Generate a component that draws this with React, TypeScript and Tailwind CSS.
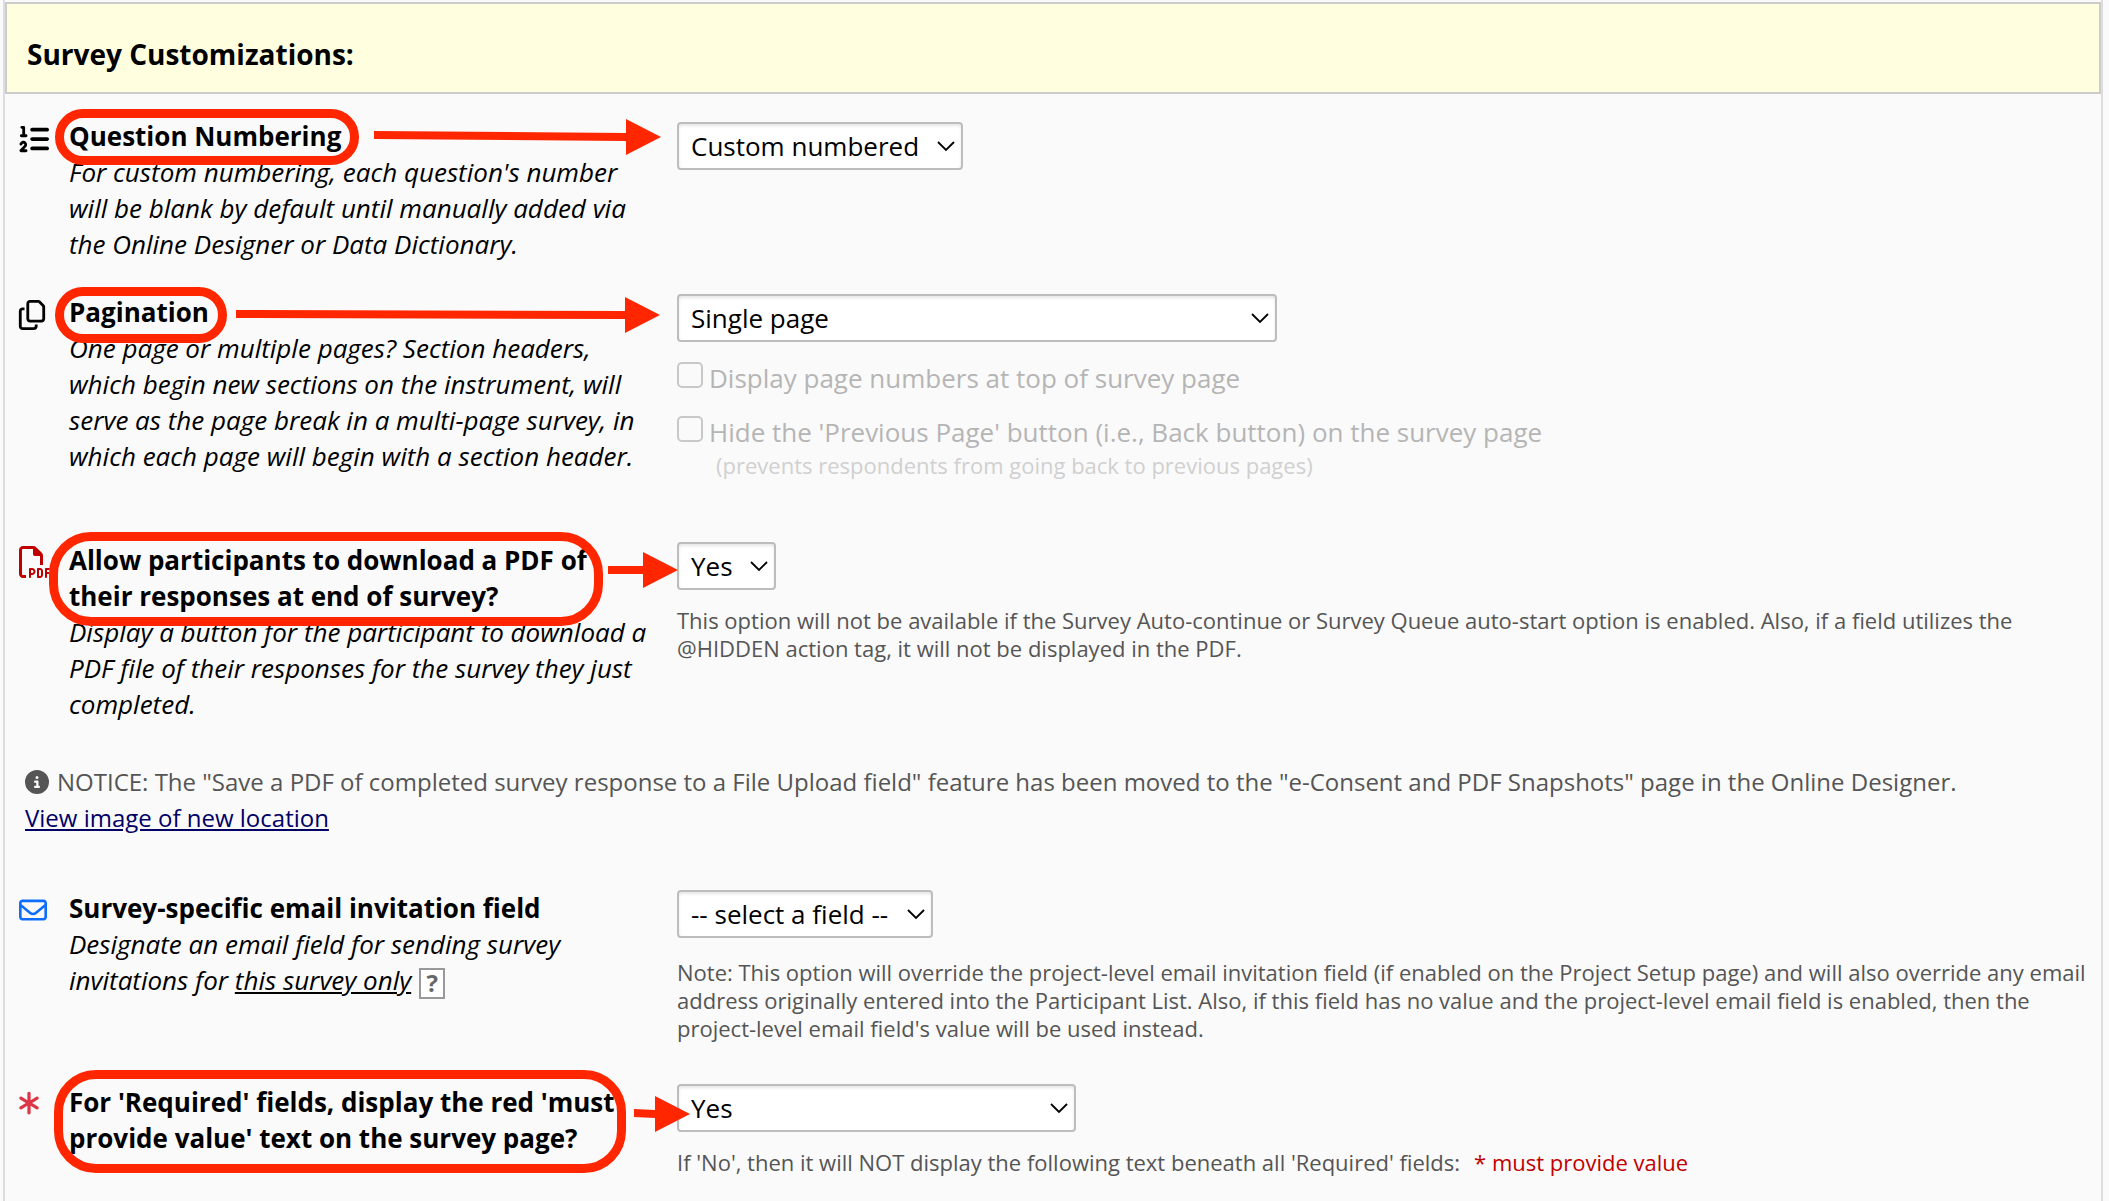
import type { ReactNode } from 'react'
import {
  FaAsterisk,
  FaCircleInfo,
  FaListOl,
  FaRegCopy,
  FaRegEnvelope,
  FaRegFilePdf,
} from 'react-icons/fa6'

type RowProps = {
  icon: ReactNode
  title: string
  htmlFor: string
  description?: ReactNode
  children: ReactNode
  marks?: ReactNode
  className: string
}

function Row({ icon, title, htmlFor, description, children, marks, className }: RowProps) {
  return (
    <div className={`relative grid grid-cols-[50px_580px_1fr] ${className}`}>
      <div className="pt-1.5">{icon}</div>
      <div>
        <label htmlFor={htmlFor} className="block font-bold">
          {title}
        </label>
        {description && <p className="italic">{description}</p>}
      </div>
      <div className="pl-7">{children}</div>
      {marks}
    </div>
  )
}

type SelectProps = {
  id: string
  options: string[]
  className: string
}

function Select({ id, options, className }: SelectProps) {
  return (
    <div className={`relative ${className}`}>
      <select
        id={id}
        className="block h-12 w-full appearance-none rounded border-2 border-[#bdbdbd] bg-white pl-3 text-[26px] leading-[36px] shadow-[inset_0_2px_3px_rgba(0,0,0,0.1)]"
      >
        {options.map((option) => (
          <option key={option}>{option}</option>
        ))}
      </select>
      <svg
        viewBox="0 0 18 11"
        className="pointer-events-none absolute top-[19px] right-2 w-[18px]"
        fill="none"
        stroke="#000"
        strokeWidth="1.8"
      >
        <path d="M1 1l8 8 8-8" />
      </svg>
    </div>
  )
}

// Red outline drawn over a setting's title
function Ring({ className }: { className: string }) {
  return <div className={`pointer-events-none absolute border-[#ff2600] border-9 ${className}`} />
}

function Arrow({ length, drop = 0, className }: { length: number; drop?: number; className: string }) {
  const neck = length - 35
  return (
    <svg
      width={length}
      height="36"
      viewBox={`0 0 ${length} 36`}
      fill="#ff2600"
      className={`pointer-events-none absolute ${className}`}
    >
      <path d={`M0 ${14 - drop}L${neck} 14V0L${length} 18L${neck} 36V22L0 ${22 - drop}Z`} />
    </svg>
  )
}

export default function App() {
  return (
    <div className="min-h-screen bg-[#fafafa] pr-1.5 pl-[3px] font-['Open_Sans','Noto_Sans',sans-serif] text-[26px] leading-[36px] text-black">
      <main className="min-h-screen border-x-2 border-[#ddd] pt-0.5">
        <h1 className="border-2 border-[#ccc] bg-[#ffffe0] px-5 pt-8 pb-5 text-[28px] leading-[36px] font-bold">
          Survey Customizations:
        </h1>

        <form className="pr-3 pl-3.5">
          <Row
            className="mt-6"
            icon={<FaListOl className="size-[30px]" />}
            title="Question Numbering"
            htmlFor="numbering"
            description={
              <>
                For custom numbering, each question's number
                <br />
                will be blank by default until manually added via
                <br />
                the Online Designer or Data Dictionary.
              </>
            }
            marks={
              <>
                <Ring className="-top-[9px] left-9 h-14 w-[304px] rounded-[28px]" />
                <Arrow length={287} drop={2} className="top-px left-[355px]" />
              </>
            }
          >
            <Select id="numbering" className="mt-1 w-[286px]" options={['Custom numbered', 'Auto numbered']} />
          </Row>

          <Row
            className="mt-8"
            icon={<FaRegCopy className="-ml-0.5 size-[30px]" />}
            title="Pagination"
            htmlFor="pagination"
            description={
              <>
                One page or multiple pages? Section headers,
                <br />
                which begin new sections on the instrument, will
                <br />
                serve as the page break in a multi-page survey, in
                <br />
                which each page will begin with a section header.
              </>
            }
            marks={
              <>
                <Ring className="-top-[7px] left-9 h-14 w-[172px] rounded-[28px]" />
                <Arrow length={424} drop={1} className="top-[3px] left-[217px]" />
              </>
            }
          >
            <Select id="pagination" className="w-[600px]" options={['Single page', 'Multiple pages']} />
            <div className="mt-[18px] flex gap-1.5 text-[#b5b5b5]">
              <input
                id="page-numbers"
                type="checkbox"
                disabled
                className="mt-0.5 size-[26px] appearance-none rounded-[5px] border-2 border-[#c8c8c8]"
              />
              <label htmlFor="page-numbers">Display page numbers at top of survey page</label>
            </div>
            <div className="mt-[18px] flex gap-1.5 text-[#b5b5b5]">
              <input
                id="hide-previous"
                type="checkbox"
                disabled
                className="mt-0.5 size-[26px] appearance-none rounded-[5px] border-2 border-[#c8c8c8]"
              />
              <label htmlFor="hide-previous">
                Hide the 'Previous Page' button (i.e., Back button) on the survey page
              </label>
            </div>
            <p className="mt-px pl-[39px] text-[22px] leading-[28px] text-[#d0d0d0]">
              (prevents respondents from going back to previous pages)
            </p>
          </Row>

          <Row
            className="mt-[63px]"
            icon={<FaRegFilePdf className="-mt-0.5 size-8 text-[#c00000]" />}
            title="Allow participants to download a PDF of their responses at end of survey?"
            htmlFor="download-pdf"
            description={
              <>
                Display a button for the participant to download a PDF file of their responses for the survey they just
                completed.
              </>
            }
            marks={
              <>
                <Ring className="-top-2.5 left-[30px] h-[94px] w-[554px] rounded-[42px]" />
                <Arrow length={70} className="top-2.5 left-[589px]" />
              </>
            }
          >
            <Select id="download-pdf" className="w-[99px]" options={['Yes', 'No']} />
            <p className="mt-4 text-[22px] leading-[28px] text-[#555]">
              This option will not be available if the Survey Auto-continue or Survey Queue auto-start option is
              enabled. Also, if a field utilizes the @HIDDEN action tag, it will not be displayed in the PDF.
            </p>
          </Row>

          <div className="mt-[42px] pl-1.5 text-[24px] leading-[36px] text-[#555]">
            <p>
              <FaCircleInfo className="mr-2 inline size-6 align-[-3px]" />
              NOTICE: The "Save a PDF of completed survey response to a File Upload field" feature has been moved to
              the "e-Consent and PDF Snapshots" page in the Online Designer.
            </p>
            <a href="#location" className="text-[#000066] underline">
              View image of new location
            </a>
          </div>

          <Row
            className="mt-[54px]"
            icon={<FaRegEnvelope className="size-7 text-[#0d6efd]" />}
            title="Survey-specific email invitation field"
            htmlFor="email-field"
            description={
              <>
                Designate an email field for sending survey
                <br />
                invitations for <u>this survey only</u>
                <button
                  type="button"
                  className="ml-2 h-[31px] w-[26px] border-2 border-[#999] bg-white align-[-2px] text-[24px] leading-[26px] font-bold text-[#666] not-italic"
                >
                  ?
                </button>
              </>
            }
          >
            <Select id="email-field" className="w-[256px]" options={['-- select a field --']} />
            <p className="mt-5 text-[22px] leading-[28px] text-[#555]">
              Note: This option will override the project-level email invitation field (if enabled on the Project Setup
              page) and will also override any email address originally entered into the Participant List. Also, if this
              field has no value and the project-level email field is enabled, then the project-level email field's
              value will be used instead.
            </p>
          </Row>

          <Row
            className="mt-[42px]"
            icon={<FaAsterisk className="-ml-[3px] size-[26px] text-[#dc3545]" />}
            title="For 'Required' fields, display the red 'must provide value' text on the survey page?"
            htmlFor="required-text"
            marks={
              <>
                <Ring className="-top-3.5 left-[35px] h-[103px] w-[572px] rounded-[42px]" />
                <Arrow length={56} drop={1} className="top-3 left-[615px]" />
              </>
            }
          >
            <Select id="required-text" className="w-[399px]" options={['Yes', 'No']} />
            <p className="mt-4 text-[22px] leading-[28px] text-[#555]">
              If 'No', then it will NOT display the following text beneath all 'Required' fields:
              <span className="ml-3.5 text-[#c00000]">* must provide value</span>
            </p>
          </Row>
        </form>
      </main>
    </div>
  )
}
